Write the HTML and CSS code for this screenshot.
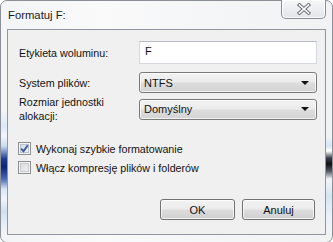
FILE: index.html
```html
<!DOCTYPE html>
<html lang="pl">
<head>
<meta charset="utf-8">
<title>Formatuj F:</title>
<link rel="stylesheet" href="styles.css">
</head>
<body>
<div class="window">
  <div class="titlebar">
    <span class="title">Formatuj F:</span>
    <div class="close">
      <svg width="14" height="12" viewBox="0 0 14 12">
        <path d="M2.5 2 L11.5 10 M11.5 2 L2.5 10" stroke="#6c6f75" stroke-width="3.6" stroke-linecap="square" fill="none"/>
        <path d="M2.5 2 L11.5 10 M11.5 2 L2.5 10" stroke="#ffffff" stroke-width="1.6" stroke-linecap="square" fill="none"/>
      </svg>
    </div>
  </div>
  <div class="client">
    <div class="form">
      <div class="row r1">
        <span class="lbl">Etykieta woluminu:</span>
        <div class="textbox">F</div>
      </div>
      <div class="row r2">
        <span class="lbl">System plików:</span>
        <div class="combo"><span>NTFS</span><span class="arrow"></span></div>
      </div>
      <div class="row r3">
        <span class="lbl">Rozmiar jednostki<br>alokacji:</span>
        <div class="combo"><span>Domyślny</span><span class="arrow"></span></div>
      </div>
    </div>
    <div class="checks">
      <div class="check">
        <span class="box checked">
          <svg width="9" height="9" viewBox="0 0 9 9"><path d="M1.2 4.6 L3.5 7.2 L7.8 1.2" stroke="#3d5a9c" stroke-width="1.9" fill="none"/></svg>
        </span>
        <span>Wykonaj szybkie formatowanie</span>
      </div>
      <div class="check">
        <span class="box"></span>
        <span>Włącz kompresję plików i folderów</span>
      </div>
    </div>
    <div class="buttons">
      <div class="btn ok">OK</div>
      <div class="btn cancel">Anuluj</div>
    </div>
  </div>
</div>
</body>
</html>
```

FILE: styles.css
```css
* { box-sizing: border-box; }
html, body { margin: 0; padding: 0; }
body {
  width: 333px;
  height: 242px;
  overflow: hidden;
  background: #ffffff;
  font-family: "Liberation Sans", Arial, sans-serif;
  font-size: 10.7px;
  color: #111;
}
.window {
  width: 333px;
  height: 243px;
  border: 1px solid #8b9098;
  border-radius: 7px 7px 7px 7px;
  background:
    linear-gradient(to bottom, rgba(255,255,255,0) 0px, rgba(210,228,246,0.0) 110px, #dbe9f7 125px, #f2f6fb 135px, #c9dcf2 145px, #1d3a8c 158px, #0c2478 166px, #4a68b4 178px, #d8e6f5 188px, #f0f5fb 198px, #cfe0f2 210px, #e3edf8 222px, rgba(255,255,255,0) 232px) left top / 6px 100% no-repeat,
    linear-gradient(to bottom, rgba(255,255,255,0) 0px, rgba(255,255,255,0) 135px, #d7e6f4 145px, #ffffff 150px, #3a3f4a 157px, #111 163px, #4f5560 170px, #f2f5f8 178px, #d6e5f3 195px, #e9f1f9 215px, rgba(255,255,255,0) 230px) right top / 6px 100% no-repeat,
    linear-gradient(to right, #f3f4f6 0%, #fafafb 30%, #f5f6f7 60%, #f1f2f4 100%);
  display: flex;
  flex-direction: column;
  margin: 0 0 0 0;
}
.titlebar {
  height: 28px;
  display: flex;
  align-items: flex-start;
}
.title {
  font-size: 11.3px;
  color: #1a1a1a;
  padding-left: 7px;
  margin-top: 8px;
}
.close {
  margin-left: auto;
  margin-right: 6px;
  margin-top: -1px;
  width: 45px;
  height: 19px;
  border: 1px solid #8a8e96;
  border-top: none;
  border-radius: 0 0 5px 5px;
  background: linear-gradient(to bottom, #f6f7f9 0%, #eceef1 50%, #e2e5e9 100%);
  box-shadow: inset 0 0 0 1px rgba(255,255,255,0.8);
  display: flex;
  align-items: center;
  justify-content: center;
}
.client {
  margin: 0 6px;
  height: 206px;
  border: 1px solid #8f96a0;
  background: #f0f0f0;
  display: flex;
  flex-direction: column;
}
.form {
  padding: 11px 8px 0 11px;
}
.row {
  display: flex;
  align-items: center;
}
.r1 { height: 23px; }
.r2 { height: 21px; margin-top: 8px; }
.r3 { height: 28px; margin-top: 2px; }
.lbl {
  width: 120px;
  line-height: 14px;
}
.textbox {
  width: 178px;
  height: 23px;
  background: #fff;
  border: 1px solid #d5d8dd;
  border-top-color: #b9bcc2;
  padding: 3px 0 0 5px;
  font-size: 11px;
}
.combo {
  width: 178px;
  height: 21px;
  border: 1px solid #7a7a7a;
  border-radius: 3px;
  background: linear-gradient(to bottom, #f3f3f3 0%, #ebebeb 48%, #dddddd 52%, #d3d3d3 100%);
  box-shadow: inset 0 0 0 1px rgba(255,255,255,0.7);
  display: flex;
  align-items: center;
  padding: 0 7px 0 4px;
  font-size: 11px;
}
.combo .arrow {
  margin-left: auto;
  width: 0;
  height: 0;
  border-left: 4px solid transparent;
  border-right: 4px solid transparent;
  border-top: 4px solid #111;
}
.checks {
  margin-top: 19px;
  padding-left: 10px;
  display: flex;
  flex-direction: column;
  gap: 6px;
}
.check {
  display: flex;
  align-items: center;
  height: 13px;
  gap: 5px;
}
.box {
  width: 13px;
  height: 13px;
  border: 1px solid #8e8f8f;
  background: linear-gradient(135deg, #d6d7d9 0%, #f4f4f5 100%);
  box-shadow: inset 0 0 0 1px #f4f4f4, inset 0 0 0 2px #c8cacd;
  display: flex;
  align-items: center;
  justify-content: center;
}
.box.checked {
  background: linear-gradient(135deg, #cfd6e2 0%, #f2f4f7 100%);
  box-shadow: inset 0 0 0 1px #f4f4f4, inset 0 0 0 2px #b9c1cf;
}
.buttons {
  margin-top: auto;
  padding: 0 10px 14px 0;
  display: flex;
  justify-content: flex-end;
  gap: 7px;
}
.btn {
  height: 21px;
  border: 1px solid #707070;
  border-radius: 3px;
  background: linear-gradient(to bottom, #f2f2f2 0%, #ebebeb 48%, #dddddd 52%, #cfcfcf 100%);
  box-shadow: inset 0 0 0 1px rgba(255,255,255,0.75);
  display: flex;
  align-items: center;
  justify-content: center;
  font-size: 11px;
}
.ok { width: 75px; }
.cancel { width: 73px; }
```
